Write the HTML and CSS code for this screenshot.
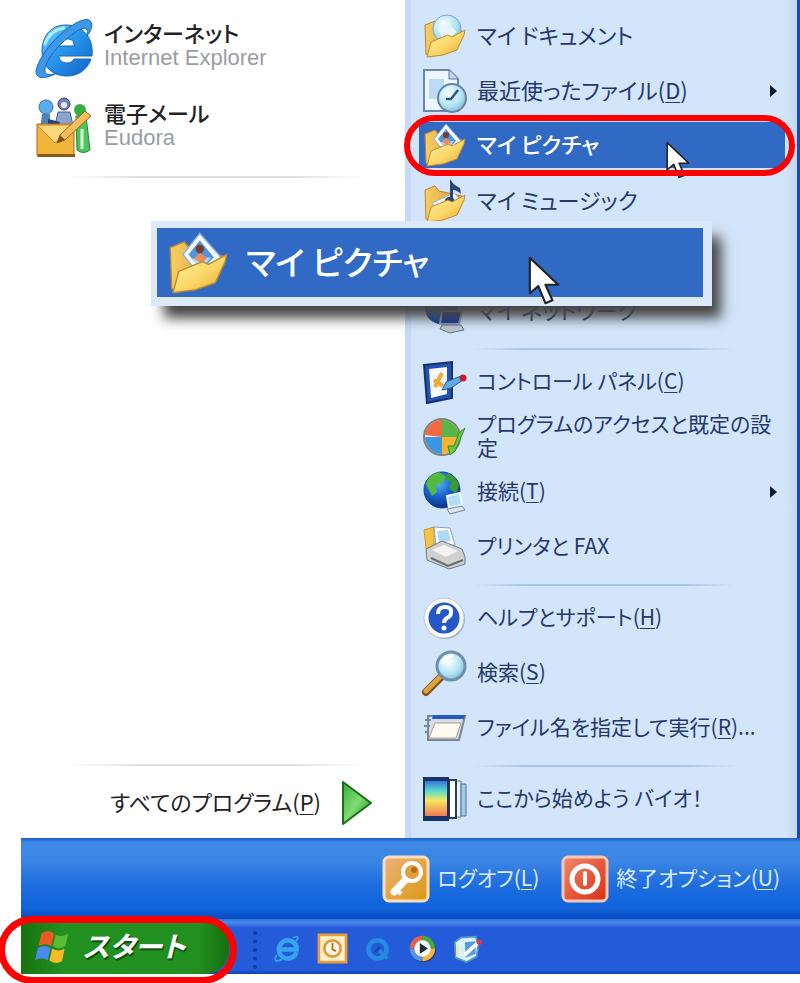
FILE: index.html
```html
<!DOCTYPE html>
<html lang="ja">
<head>
<meta charset="utf-8">
<title>スタート</title>
<link rel="stylesheet" href="styles.css">
</head>
<body>
<svg class="defs" aria-hidden="true">
  <defs>
    <linearGradient id="gold" x1="0" y1="0" x2="1" y2="1"><stop offset="0" stop-color="#fff3a6"/><stop offset=".55" stop-color="#fbd768"/><stop offset="1" stop-color="#e3a22c"/></linearGradient>
    <linearGradient id="goldBack" x1="0" y1="0" x2="1" y2="0"><stop offset="0" stop-color="#f6cf62"/><stop offset="1" stop-color="#d99a3a"/></linearGradient>
    <radialGradient id="blueBall" cx=".4" cy=".3" r=".75"><stop offset="0" stop-color="#5fb4f5"/><stop offset=".5" stop-color="#1763cf"/><stop offset="1" stop-color="#0a2a7c"/></radialGradient>
    <radialGradient id="glass" cx=".4" cy=".35" r=".7"><stop offset="0" stop-color="#fff"/><stop offset=".6" stop-color="#b4e6f5"/><stop offset="1" stop-color="#7fb9dc"/></radialGradient>
    <linearGradient id="ieBlue" x1="0" y1="0" x2="1" y2="1"><stop offset="0" stop-color="#7fe0fb"/><stop offset=".4" stop-color="#2a9cf0"/><stop offset="1" stop-color="#1160c4"/></linearGradient>
    <linearGradient id="rainbow" x1="0" y1="0" x2="0" y2="1"><stop offset="0" stop-color="#2f78dd"/><stop offset=".3" stop-color="#5fdcc8"/><stop offset=".55" stop-color="#f5e860"/><stop offset="1" stop-color="#ef7a55"/></linearGradient>
    <linearGradient id="leaf" x1="0" y1="0" x2="1" y2="1"><stop offset="0" stop-color="#39a838"/><stop offset=".5" stop-color="#7fdc72"/><stop offset="1" stop-color="#118a17"/></linearGradient>
    <linearGradient id="keyBg" x1="0" y1="0" x2="1" y2="1"><stop offset="0" stop-color="#efb07c"/><stop offset="1" stop-color="#d99a10"/></linearGradient>
    <linearGradient id="powerBg" x1="0" y1="0" x2="1" y2="1"><stop offset="0" stop-color="#f08a6c"/><stop offset="1" stop-color="#dc2c10"/></linearGradient>
    <symbol id="folderBack" viewBox="0 0 44 44"><path d="M3 11l10-4 4 5 23 5-3 14-29 12-4-3z" fill="url(#goldBack)" stroke="#b98532"/></symbol>
    <symbol id="folderFront" viewBox="0 0 44 44"><path d="M5 43l4-15 17-7 4 2 13-7-1 5-7 15-14 5z" fill="url(#gold)" stroke="#c18a2b"/></symbol>
    <symbol id="pictures" viewBox="0 0 44 44">
      <use href="#folderBack"/>
      <path d="M24 1l15 17-14 14-13-16z" fill="#f7fbff" stroke="#8fb0d4"/>
      <path d="M24 6l10 12-9 9-9-11z" fill="#4f94dc"/><path d="M18 19l14-1-7 9z" fill="#a9dcf3"/>
      <circle cx="24" cy="12" r="3" fill="#7a3d2a"/><path d="M20 19q4-7 9 0l-4 3z" fill="#f08b62"/>
      <use href="#folderFront"/>
    </symbol>
    <symbol id="cursor" viewBox="0 0 24 34"><path d="M2 1v25l6-5 5 12 5-2-5-11h9z" fill="#fff" stroke="#222" stroke-width="1.500" stroke-linejoin="round"/></symbol>
    <symbol id="ie" viewBox="0 0 60 62">
      <path d="M32 8C17 8 8 19 8 34s10 25 25 25c11 0 20-6 24-17H40c-2 3-4 4-7 4-5 0-8-3-8-7h33C60 21 49 8 32 8zm-7 21c1-5 3-7 8-7s7 2 7 7z" fill="url(#ieBlue)" stroke="#1767bb" fill-rule="evenodd"/>
      <path d="M53 19c6-7 6-14 2-16-5-2-14 3-22 9C18 23 4 42 2 54c0 9 10 8 21 2-8 3-13 2-12-4 1-9 13-24 24-32 7-6 14-10 17-8 2 1 2 4 1 7z" fill="#3f97e8" stroke="#1a68c2"/>
      <path d="M11 27q5-14 19-16" fill="none" stroke="#a8effd" stroke-width="3" stroke-linecap="round"/>
    </symbol>
    <symbol id="flag" viewBox="0 0 40 38">
      <path d="M7 4q7-5 14 0l-3 14q-7-4-14 0z" fill="#ef5a24"/><path d="M23 5q7 4 14-1l-3 14q-7 5-14 0z" fill="#58bb32"/>
      <path d="M3 20q7-4 14 0l-3 14q-7-5-14 0z" fill="#4b8bf0"/><path d="M19 21q7 4 14 0l-3 14q-7 4-14-1z" fill="#fbb827"/>
    </symbol>
  </defs>
</svg>

<main class="screen">
  <div class="menu">
    <section class="programs">
      <a class="program" href="#">
        <svg class="program-icon"><use href="#ie"/></svg>
        <span><strong>インターネット</strong><small>Internet Explorer</small></span>
      </a>
      <a class="program" href="#">
        <svg class="program-icon" viewBox="0 0 60 62">
          <circle cx="12" cy="10" r="7" fill="#58aeea" stroke="#39709f"/><path d="M8 17h8v16H6z" fill="#4d83b8"/>
          <circle cx="30" cy="7" r="6" fill="#777fc4" stroke="#39406f"/><circle cx="30" cy="8" r="3" fill="#e8edfb"/><path d="M24 15l12 0 4 18H20z" fill="#89a5cb" stroke="#455f8a"/>
          <path d="M14 22l12 3-3 8h-9z" fill="#26417f"/>
          <circle cx="46" cy="13" r="6" fill="#38ad43"/><path d="M42 19h10l4 34q-7 5-13 0z" fill="#4fc45c" stroke="#228737"/><path d="M48 32v20" stroke="#dcffdc" stroke-width="3"/>
          <path d="M3 27h37v32H3z" fill="#f0b63c" stroke="#a8691a"/><path d="M3 28l18 18 19-18z" fill="#fbd67c" stroke="#d28a23"/><path d="M4 57h37v3H4z" fill="#8d5719"/>
          <path d="M51 14l6 5-26 24-8 3 3-8z" fill="#f5bd5c" stroke="#9b6423"/><path d="M23 46l3-8 5 5z" fill="#7d4f23"/>
        </svg>
        <span><strong>電子メール</strong><small>Eudora</small></span>
      </a>
      <hr>
      <div class="all">
        <hr>
        <button class="all-programs" type="button"><span>すべてのプログラム(<u>P</u>)</span>
          <svg class="play" viewBox="0 0 32 46"><path d="M2 2l28 21L2 44z" fill="url(#leaf)" stroke="#147318" stroke-width="2" stroke-linejoin="round"/></svg>
        </button>
      </div>
    </section>

    <nav class="places">
      <ul>
        <li><a href="#"><svg class="icon" viewBox="0 0 44 44"><use href="#folderBack"/><circle cx="25" cy="15" r="14" fill="url(#glass)" stroke="#7aa5cf"/><path d="M15 14l10-5 10 9-12 10z" fill="#e7f6ff"/><use href="#folderFront"/></svg><span>マイ ドキュメント</span></a></li>
        <li><a href="#"><svg class="icon" viewBox="0 0 44 44"><path d="M2 1h25l9 9v32H2z" fill="#eef6ff" stroke="#6989b3" stroke-width="2"/><path d="M27 1v9h9" fill="#c1d6ef" stroke="#55779f"/><path d="M7 10h15v20H7z" fill="#b9dbf3"/><circle cx="30" cy="29" r="14" fill="url(#glass)" stroke="#68839f" stroke-width="2"/><path d="M36 21l-7 9h-5" fill="none" stroke="#2c5788" stroke-width="2.500"/></svg><span>最近使ったファイル(<u>D</u>)</span><i class="more"></i></a></li>
        <li class="selected"><a href="#"><svg class="icon"><use href="#pictures"/></svg><span>マイ ピクチャ</span></a><svg class="pointer"><use href="#cursor"/></svg></li>
        <li><a href="#"><svg class="icon" viewBox="0 0 44 44"><use href="#folderBack"/><path d="M10 24l22-10 6 6-19 12z" fill="#f5f9ff" stroke="#9db2c9"/><path d="M28 18V0q2 5 10 9l1 6q-4-4-8-4v8a5 4 0 1 1-3-1z" fill="#29457f"/><use href="#folderFront"/></svg><span>マイ ミュージック</span></a></li>
        <li class="after-gap"><a href="#"><svg class="icon" viewBox="0 0 44 44"><circle cx="19" cy="19" r="16" fill="url(#blueBall)"/><path d="M20 22h20l-3 13H18z" fill="#173a91" stroke="#8ca1bd" stroke-width="2"/><path d="M20 36h19l3 5-14 3-10-4z" fill="#bcc5d0" stroke="#67758a"/></svg><span>マイ ネットワーク</span></a></li>
      </ul>
      <hr>
      <ul class="compact">
        <li><a href="#"><svg class="icon" viewBox="0 0 44 44"><path d="M2 5l28-3v36L5 43z" fill="#2353b0" stroke="#14316d" stroke-width="2"/><path d="M7 9l18-2v27L9 38z" fill="#f6faff"/><path d="M13 27l7-14M12 20l9 6" stroke="#f1ab32" stroke-width="4"/><path d="M20 30l4-8 15-6 2 4-12 8z" fill="#62a9e8" stroke="#285f9e"/><circle cx="41" cy="18" r="3.500" fill="#ce1c2c"/></svg><span>コントロール パネル(<u>C</u>)</span></a></li>
        <li><a href="#"><svg class="icon" viewBox="0 0 44 44"><circle cx="20" cy="22" r="18" fill="#eee" stroke="#7d8379" stroke-width="2"/><path d="M20 22V5A17 17 0 0 0 3 20z" fill="#ef6942"/><path d="M20 22h17A17 17 0 0 0 20 5z" fill="#56b746"/><path d="M20 22H3a17 17 0 0 0 17 17z" fill="#3f94e3"/><path d="M20 22h17a17 17 0 0 1-17 17z" fill="#f5b52f"/><path d="M26 31l2 9 5-4 10-23-6 5-5 13z" fill="#6cc93f" stroke="#39872c"/></svg><span class="wrap">プログラムのアクセスと既定の設定</span></a></li>
        <li><a href="#"><svg class="icon" viewBox="0 0 44 44"><circle cx="20" cy="20" r="18" fill="url(#blueBall)" stroke="#174387"/><path d="M4 14q3-10 13-12l7 5-5 7-6 1 2 7-5 4z" fill="#52bb3e"/><path d="M26 3q8 4 11 12l-3 9-7-6 2-6-6-3z" fill="#3c9b31"/><path d="M25 26l13-3 2 12-13 3z" fill="#b1def6" stroke="#eef7ff" stroke-width="2"/><path d="M25 39l15-3 3 4-15 4z" fill="#dce4ee" stroke="#70849d"/></svg><span>接続(<u>T</u>)</span><i class="more"></i></a></li>
        <li><a href="#"><svg class="icon" viewBox="0 0 44 44"><path d="M2 5l10-3v25l-7 4z" fill="#f5c447" stroke="#c8952d"/><path d="M12 2l16 1 5 17-19 1z" fill="#f9fcff" stroke="#8d9fb1"/><path d="M15 6l11-1 3 11-12 2z" fill="#aedaf2"/><path d="M4 24l16-8 20 8 3 8v7l-16 5L5 35z" fill="#cfd0cf" stroke="#777b80"/><path d="M10 25l12-5 14 6-12 6z" fill="#f4f4f1"/><path d="M9 33l17 8 15-6" fill="none" stroke="#666d73" stroke-width="2"/></svg><span>プリンタと FAX</span></a></li>
      </ul>
      <hr>
      <ul class="compact">
        <li><a href="#"><svg class="icon" viewBox="0 0 44 44"><circle cx="23" cy="23" r="20" fill="#9da7b6"/><circle cx="22" cy="22" r="20" fill="#f8fafc" stroke="#c0c9d5"/><circle cx="22" cy="22" r="15.500" fill="#2557c7"/><path d="M16 18q0-7 7-7t6 6q0 3-4 5-3 2-3 5" fill="none" stroke="#fff" stroke-width="4"/><circle cx="22" cy="32" r="2.500" fill="#fff"/></svg><span>ヘルプとサポート(<u>H</u>)</span></a></li>
        <li><a href="#"><svg class="icon" viewBox="0 0 44 44"><path d="M4 41l17-17" stroke="#7e541d" stroke-width="8" stroke-linecap="round"/><path d="M4 40l16-16" stroke="#dfa13a" stroke-width="5" stroke-linecap="round"/><circle cx="29" cy="15" r="14" fill="url(#glass)" stroke="#728fa9" stroke-width="3"/><path d="M20 13q3-8 11-8" fill="none" stroke="#fff" stroke-width="3"/></svg><span>検索(<u>S</u>)</span></a></li>
        <li><a href="#"><svg class="icon" viewBox="0 0 44 44"><path d="M6 10h37l-6 24H6z" fill="#d7dde7" stroke="#7b8594" stroke-width="2"/><path d="M11 9h32l-1 4H10z" fill="#2859c1"/><path d="M13 17h26l-5 15H7z" fill="#fffaf0" stroke="#a99e8d"/><path d="M3 14h6M2 20h6M3 26h4" stroke="#7287a8" stroke-width="2"/></svg><span>ファイル名を指定して実行(<u>R</u>)...</span></a></li>
      </ul>
      <hr>
      <ul class="compact">
        <li><a href="#"><svg class="icon" viewBox="0 0 44 44"><path d="M32 4h7v36h-7z" fill="#e9f4ff" stroke="#657a98"/><path d="M39 7h5v32h-5z" fill="#9ecbe6" stroke="#567190"/><path d="M27 3h7v38h-7z" fill="#fff" stroke="#253b67" stroke-width="2"/><path d="M1 0h26v44H1z" fill="#1a3269"/><path d="M3 4h22v35H3z" fill="url(#rainbow)"/></svg><span>ここから始めよう バイオ！</span></a></li>
      </ul>
    </nav>
  </div>

  <footer class="session">
    <button type="button"><svg class="session-icon" viewBox="0 0 48 48"><rect x="2" y="2" width="44" height="44" rx="5" fill="url(#keyBg)" stroke="#f7dfbd" stroke-width="3"/><path d="M12 37l14-15" stroke="#fff" stroke-width="7" stroke-linecap="round"/><path d="M14 34l5 5" stroke="#fff" stroke-width="4"/><circle cx="30" cy="17" r="9" fill="#dda03c" stroke="#fff" stroke-width="4"/><circle cx="32" cy="15" r="3" fill="#b56d1c"/></svg><span>ログオフ(<u>L</u>)</span></button>
    <button type="button"><svg class="session-icon" viewBox="0 0 48 48"><rect x="2" y="2" width="44" height="44" rx="5" fill="url(#powerBg)" stroke="#f9c7b8" stroke-width="3"/><circle cx="24" cy="24" r="13" fill="none" stroke="#fff" stroke-width="5"/><path d="M24 18v11" stroke="#fff" stroke-width="4" stroke-linecap="round"/></svg><span>終了オプション(<u>U</u>)</span></button>
  </footer>

  <footer class="taskbar">
    <button class="start" type="button"><svg class="flag"><use href="#flag"/></svg><span>スタート</span></button>
    <div class="quick">
      <i class="grip"></i>
      <svg viewBox="0 0 32 32"><g fill="none" stroke="#36a4ee" stroke-width="5"><path d="M26 20a10 10 0 1 1 0-6v3H9"/><path d="M25 8q6-7-3-4M4 23q-5 10 6 5" stroke-width="2"/></g></svg>
      <svg viewBox="0 0 32 32"><path d="M1 1h30v30H1z" fill="#fff0cc" stroke="#e99b36" stroke-width="3"/><circle cx="16" cy="16" r="9" fill="#fff8e8" stroke="#df9b3e" stroke-width="3"/><path d="M16 10v7l4 2" fill="none" stroke="#b76c23" stroke-width="2"/></svg>
      <svg viewBox="0 0 32 32"><circle cx="16" cy="17" r="10" fill="none" stroke="#278ae5" stroke-width="5"/><path d="M18 18l9 9" stroke="#218bdf" stroke-width="4"/><path d="M13 20l6-6" stroke="#1b4ba5" stroke-width="3"/></svg>
      <svg viewBox="0 0 32 32"><circle cx="17" cy="17" r="14" fill="#26385f"/><path d="M16 16V2A14 14 0 0 0 2 16z" fill="#ee6140"/><path d="M16 16h14A14 14 0 0 0 16 2z" fill="#49a842"/><path d="M16 16H2a14 14 0 0 0 14 14z" fill="#5793df"/><path d="M16 16h14a14 14 0 0 1-14 14z" fill="#f5b544"/><circle cx="16" cy="16" r="9" fill="#f9fbfa"/><path d="M13 10l9 6-9 6z" fill="#202c34"/></svg>
      <svg viewBox="0 0 32 32"><path d="M2 9l7-5 16-1 3 9-2 13-11 6-12-5z" fill="#d9f1ff" stroke="#5799c9" stroke-width="2"/><path d="M13 9l12-1v14l-11 4z" fill="#589cd4"/><path d="M13 23l14-13" stroke="#fff" stroke-width="4"/><circle cx="29" cy="9" r="3" fill="#d93c52"/><path d="M5 12v13" stroke="#f0e6a5" stroke-width="3"/></svg>
    </div>
  </footer>

  <aside class="callout">
    <svg class="callout-icon"><use href="#pictures"/></svg>
    <span>マイ ピクチャ</span>
    <svg class="callout-pointer"><use href="#cursor"/></svg>
  </aside>
</main>
</body>
</html>
```
FILE: styles.css
```css
* { box-sizing: border-box; }

body {
  margin: 0;
  background: #fff;
  color: #222;
  font: 22px/24px "Noto Sans CJK JP", sans-serif;
  font-feature-settings: "palt";
}

a { color: inherit; text-decoration: none; }
button { border: 0; padding: 0; background: none; color: inherit; font: inherit; font-feature-settings: inherit; white-space: nowrap; }
a > span, button > span, .callout > span { padding-bottom: 4px; }
svg { flex: none; overflow: visible; }
u { text-decoration-thickness: 1px; text-underline-offset: 3px; }
ul { list-style: none; margin: 0; padding: 0; }

.defs { position: absolute; width: 0; height: 0; }
.screen { position: relative; overflow: hidden; padding-bottom: 10px; }

.menu { display: grid; grid-template-columns: 405fr 395fr; }

.programs { display: flex; flex-direction: column; padding: 8px 32px 4px 34px; }
.program { display: flex; align-items: center; gap: 10px; height: 80px; }
.program-icon { width: 60px; height: 62px; }
.program span { display: flex; flex-direction: column; }
.program strong { font-weight: 500; }
.program small { color: #999da3; font: 22px/28px "Liberation Sans", sans-serif; }

hr { width: 100%; height: 2px; margin: 0; border: 0; }
.programs hr { width: 300px; margin-left: 32px; background: linear-gradient(90deg, transparent, #dcdfe1 25%, #dcdfe1 75%, transparent); }
.programs > hr { margin-top: 8px; }
.all { margin-top: auto; }
.all-programs { display: flex; align-items: center; justify-content: flex-end; gap: 20px; width: 100%; height: 62px; margin-top: 6px; }
.play { width: 32px; height: 46px; }

.places {
  padding: 8px 0 12px;
  border-left: 6px solid #c5dafa;
  border-right: 3px solid #1149cb;
  background: linear-gradient(90deg, #d3e5fa 97%, #c3d8ef);
  color: #25386c;
}
.places li { position: relative; height: 55px; }
.places a { display: flex; align-items: center; gap: 11px; height: 100%; padding: 0 20px 0 11px; white-space: nowrap; }
.places hr { width: 264px; margin: 10px 0 4px 62px; background: linear-gradient(90deg, transparent, #a9c4e5 20%, #a9c4e5 80%, transparent); }
.compact { font-size: 21px; }
.icon { width: 44px; height: 44px; }
.places .wrap { flex: none; width: 300px; white-space: normal; word-break: break-all; }
.more { margin-left: auto; border: 6px solid transparent; border-right: 0; border-left-color: #121b33; border-left-width: 7px; }
.places .after-gap { margin-top: 55px; }

.places .selected { z-index: 1; padding: 4px 12px 5px 8px; }
.selected a { padding-left: 3px; background: #316ac5; color: #fff; font-weight: 500; }
.selected::after { content: ""; position: absolute; inset: -3px 2px -3px -7px; border: 6px solid #f00; border-radius: 31px; }
.pointer { position: absolute; top: 23px; right: 106px; width: 26px; height: 38px; }

.session {
  display: flex;
  align-items: center;
  justify-content: flex-end;
  gap: 22px;
  height: 81px;
  margin-left: 21px;
  padding-right: 20px;
  background: linear-gradient(#1c5fcb, #3e89e5 6%, #3b85e4 28%, #1d6cdf 60%, #1064dd 85%, #0b4cc1);
  color: #dcecff;
  font-size: 21px;
}
.session button { display: flex; align-items: center; gap: 7px; }
.session-icon { width: 48px; height: 48px; }

.taskbar { display: flex; height: 55px; margin-left: 21px; background: linear-gradient(#2f6fe0, #4a8bee 6%, #235bd9 16%, #235bd9 92%, #0f40bd); }
.start { position: relative; display: flex; align-items: center; gap: 12px; width: 208px; padding-left: 14px; border-radius: 0 24px 24px 0; background: linear-gradient(90deg, #17720f, #229020 20%, #229020 85%, #14700f); color: #fff; font-size: 28px; font-weight: 700; font-style: italic; text-shadow: 1px 2px 1px #0a4a0a; }
.start::after { content: ""; position: absolute; inset: -3px -8px -10px -23px; border: 7px solid #f00; border-radius: 34px; }
.flag { width: 36px; height: 34px; }
.quick { display: flex; align-items: center; gap: 16px; padding-left: 24px; }
.quick svg { width: 29px; height: 29px; margin-top: 4px; }
.grip { width: 4px; height: 38px; margin-top: 6px; border-left: 4px dotted #123d9f; }

.callout {
  position: absolute;
  z-index: 2;
  top: 221px;
  left: 151px;
  display: flex;
  align-items: center;
  gap: 18px;
  width: 561px;
  height: 85px;
  padding-left: 9px;
  border: solid #dbe9fa;
  border-width: 7px 9px 9px 6px;
  background: #316ac5;
  box-shadow: 11px 14px 12px -2px #444;
  color: #fff;
  font-size: 33px;
  line-height: 40px;
  font-weight: 500;
}
.callout-icon { width: 62px; height: 62px; }
.callout-pointer { position: absolute; top: 28px; right: 142px; width: 34px; height: 49px; }
```
